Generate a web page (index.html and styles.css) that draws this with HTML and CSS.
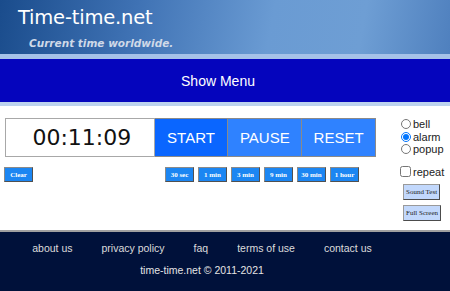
FILE: index.html
```html
<!DOCTYPE html>
<html lang="en">
<head>
    <meta charset="UTF-8">
    <meta name="viewport" content="width=device-width, initial-scale=1.0">
    <title>Online Timer - Time-time.net</title>
    <link rel="stylesheet" href="styles.css">
</head>
<body>
    <header class="banner">
        <div class="logo">Time-time.net</div>
        <div class="tagline">Current time worldwide.</div>
    </header>

    <div class="menu-bar">
        <span class="menu-toggle">Show Menu</span>
    </div>

    <div class="main">
        <div class="timer-area">
            <div class="timer-row">
                <div class="display">00:11:09</div>
                <button class="big-button start">START</button>
                <button class="big-button">PAUSE</button>
                <button class="big-button">RESET</button>
            </div>
            <div class="preset-row">
                <button class="small-button">Clear</button>
                <div class="presets">
                    <button class="small-button">30 sec</button>
                    <button class="small-button">1 min</button>
                    <button class="small-button">3 min</button>
                    <button class="small-button">9 min</button>
                    <button class="small-button">30 min</button>
                    <button class="small-button">1 hour</button>
                </div>
            </div>
        </div>

        <div class="side">
            <label class="option"><input type="radio" name="sound"> bell</label>
            <label class="option"><input type="radio" name="sound" checked> alarm</label>
            <label class="option"><input type="radio" name="sound"> popup</label>
            <label class="option repeat"><input type="checkbox"> repeat</label>
            <button class="light-button">Sound Test</button>
            <button class="light-button">Full Screen</button>
        </div>
    </div>

    <footer>
        <nav class="footer-links">
            <a href="#">about us</a>
            <a href="#">privacy policy</a>
            <a href="#">faq</a>
            <a href="#">terms of use</a>
            <a href="#">contact us</a>
        </nav>
        <p class="copyright">time-time.net &copy; 2011-2021</p>
    </footer>
</body>
</html>
```

FILE: styles.css
```css
body {
    font-family: "Liberation Sans", Arial, sans-serif;
    margin: 0;
    padding: 0;
    background-color: #fff;
}
.banner {
    height: 54px;
    box-sizing: border-box;
    padding: 8px 0 0 18px;
    background: linear-gradient(100deg, #1a4c8c 0%, #3f72b4 30%, #6a9bd3 60%, #6e9ed4 80%, #4f80be 100%);
}
.logo {
    font-family: "DejaVu Sans", sans-serif;
    font-size: 19.5px;
    color: #fff;
    line-height: 20px;
    letter-spacing: -0.2px;
}
.tagline {
    font-family: "DejaVu Sans", sans-serif;
    font-size: 10.5px;
    font-style: italic;
    font-weight: bold;
    color: #cfd9e8;
    margin: 9px 0 0 11px;
    line-height: 12px;
}
.menu-bar {
    height: 43px;
    background-color: #0505bd;
    border-top: 5px solid #a6c2e8;
    border-bottom: 4px solid #bcd2ee;
    display: flex;
    align-items: center;
    justify-content: center;
    padding-right: 14px;
}
.menu-toggle {
    color: #fff;
    font-size: 14px;
}
.main {
    display: flex;
    height: 124px;
    padding: 12px 0 0 5px;
    box-sizing: border-box;
}
.timer-area {
    width: 371px;
}
.timer-row {
    display: flex;
    height: 39px;
}
.display {
    width: 150px;
    box-sizing: border-box;
    border: 1px solid #a8a8a8;
    font-family: "DejaVu Sans", sans-serif;
    font-size: 22px;
    display: flex;
    align-items: center;
    justify-content: center;
    padding-left: 4px;
    color: #111;
}
.big-button {
    width: 74px;
    border: 1px solid #8a8a8a;
    border-left: none;
    background-color: #2f82ff;
    color: #fff;
    font-family: "Liberation Sans", Arial, sans-serif;
    font-size: 15px;
    padding: 0;
}
.big-button.start {
    background-color: #0a66ff;
}
.preset-row {
    display: flex;
    justify-content: space-between;
    margin: 10px 0 0 -1px;
    padding-right: 17px;
}
.presets {
    display: flex;
    gap: 4px;
}
.small-button {
    height: 15px;
    min-width: 29px;
    padding: 0 3px;
    background-color: #1c86f2;
    color: #fff;
    border: 1px solid #505050;
    border-top-color: #8a8a8a;
    border-left-color: #8a8a8a;
    font-family: "Liberation Serif", serif;
    font-size: 7px;
    font-weight: bold;
}
.side {
    display: flex;
    flex-direction: column;
    align-items: flex-start;
    padding: 0 0 0 25px;
}
.option {
    display: flex;
    align-items: center;
    font-size: 11px;
    color: #222;
    height: 12.5px;
}
.option input {
    width: 10px;
    height: 10px;
    margin: 0 2px 0 0;
}
.repeat {
    margin: 9px 0 0 -1px;
    height: 14px;
}
.repeat input {
    width: 11px;
    height: 11px;
}
.light-button {
    margin: 5px 0 0 2px;
    height: 16px;
    padding: 0 2px;
    background-color: #c2d8fc;
    color: #222;
    border: 1px solid #4c4c4c;
    border-top-color: #9a9a9a;
    border-left-color: #9a9a9a;
    font-family: "Liberation Serif", serif;
    font-size: 7px;
}
footer {
    height: 61px;
    box-sizing: border-box;
    background-color: #00113a;
    border-top: 2px solid #a0a0a0;
    padding: 10px 46px 0 0;
    text-align: center;
}
.footer-links {
    display: flex;
    justify-content: center;
    gap: 29px;
}
.footer-links a {
    color: #dcdcdc;
    text-decoration: none;
    font-size: 10.5px;
}
.copyright {
    color: #e4e4e4;
    font-size: 10.5px;
    margin: 10px 0 0 0;
}
```
